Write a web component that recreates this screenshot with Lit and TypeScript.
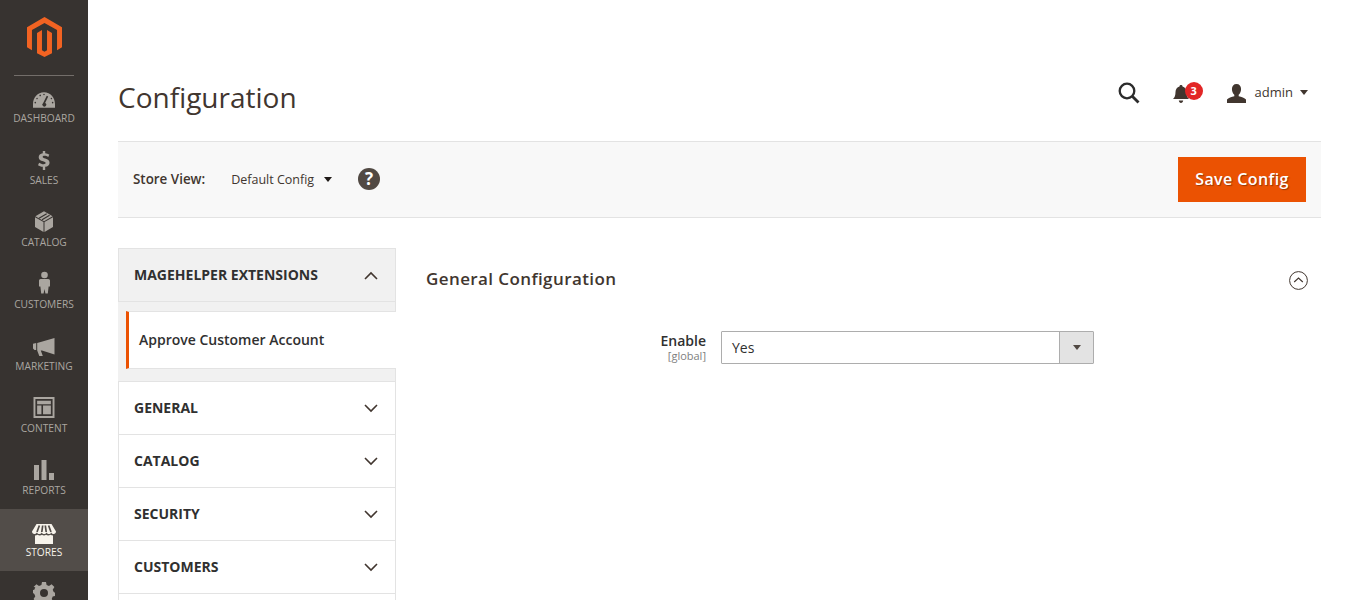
import { LitElement, html, css, svg } from "lit";
import { customElement } from "lit/decorators.js";

const nav = [
  { label: "DASHBOARD", w: 22, h: 16, vb: "0 0 24 17", icon: svg`<path fill-rule="evenodd" d="M12 0C5 0 0 6 0 13v4h24v-4C24 6 19 0 12 0ZM16.600 4.600 13.200 11.700a2.100 2.100 0 1 1-2.100.2l3.900-8ZM12 1.600a.8.8 0 1 1 0 1.700.8.8 0 0 1 0-1.700ZM7.400 2.800a.8.8 0 1 1 .9 1.500.8.8 0 0 1-.9-1.500ZM3.900 6.200a.8.8 0 1 1 1 1.300.8.8 0 0 1-1-1.300ZM2.400 10.500a.8.8 0 1 1 .2 1.700.8.8 0 0 1-.2-1.700ZM20.600 6.200a.8.8 0 1 1-1 1.300.8.8 0 0 1 1-1.300ZM21.500 10.500a.8.8 0 1 1-.2 1.700.8.8 0 0 1 .2-1.700Z"/>` },
  { label: "SALES", w: 12, h: 19, vb: "0 0 14 22", icon: svg`<path d="M5.600 0h2.800v2.400c1.900.2 3.600.8 4.800 1.600l-1.200 3c-1.300-.8-3-1.400-4.500-1.400-1.300 0-2 .5-2 1.200 0 .8 1 1.200 3 1.800 3 .9 5 2.100 5 4.900 0 2.600-1.900 4.400-5.100 4.800V22H5.600v-3.600c-2.200-.2-4.200-.9-5.600-1.900l1.300-3c1.500 1 3.500 1.800 5.300 1.800 1.500 0 2.300-.5 2.300-1.300s-.9-1.300-3-2C2.900 11.100.8 10 .8 7.200.8 4.700 2.600 2.900 5.600 2.500Z"/>` },
  { label: "CATALOG", w: 20, h: 21, vb: "0 0 20 21", icon: svg`<path d="M9.500 11v10L1 16V6.300ZM10.500 11v10l8.500-5V6.300Z"/><path d="M10 .3 18.600 5.300 10 10.200 1.400 5.300Z"/><path d="M5 7.300 12.700 2.800M8 8.700 15.600 4.300" stroke="#373330" stroke-width="1.200" fill="none"/>` },
  { label: "CUSTOMERS", w: 11, h: 23, vb: "0 0 12 24", icon: svg`<circle cx="6" cy="3.800" r="3.600"/><path d="M1.800 8.200h8.400c1 0 1.800.8 1.800 1.800v6.300h-1.500l-.9 7.700H7l-1-5-1 5H2.400l-.9-7.700H0V10c0-1 .8-1.800 1.800-1.800Z"/>` },
  { label: "MARKETING", w: 22, h: 18, vb: "0 0 22 18", icon: svg`<path d="M21.500 0v16.500L9 12.500H7.800l2 5.500H6.300L4.200 12.500V5L21.500 0ZM0 5.700 3.200 5v7H1.500L0 10.500Z"/>` },
  { label: "CONTENT", w: 22, h: 21, vb: "0 0 22 22", icon: svg`<path fill-rule="evenodd" d="M0 0h22v22H0ZM2 2v18h18V2ZM3.800 4h14.400v3.500H3.800ZM3.800 9h4.500v9H3.800ZM10 9h8.200v9H10Z"/>` },
  { label: "REPORTS", w: 20, h: 20, vb: "0 0 20 20", icon: svg`<rect x="0" y="5" width="5" height="15"/><rect x="7.500" y="0" width="5" height="20"/><rect x="15" y="13" width="5" height="7"/>` },
  { label: "STORES", w: 24, h: 20, vb: "0 0 24 20", active: true, icon: svg`<path d="M4.500 0h15L24 7.500c0 1.500-1 2.500-2.400 2.500-1.200 0-2-.6-2.400-1.500-.4 1-1.300 1.500-2.400 1.500s-2-.6-2.400-1.500c-.4 1-1.200 1.500-2.400 1.500s-2-.6-2.400-1.500c-.4 1-1.300 1.500-2.400 1.500s-2-.6-2.400-1.500C4.400 9.400 3.600 10 2.400 10 1 10 0 9 0 7.500Z"/><path d="M3 11.500c1 0 1.800-.2 2.500-.7.700.5 1.500.7 2.300.7s1.600-.2 2.200-.7c.6.500 1.300.7 2 .7s1.400-.2 2-.7c.6.500 1.400.7 2.200.7s1.600-.2 2.300-.7c.7.500 1.500.7 2.500.7V20H3Z"/><path d="M7.400 1.500 5 8M10.700 1.500 9.800 8M13.300 1.500l.9 6.500M16.600 1.500 19 8" stroke="#524d49" stroke-width="1.700" fill="none"/>` },
  { label: "", w: 22, h: 22, vb: "0 0 22 22", icon: svg`<path fill-rule="evenodd" d="M9 0h4l.6 3 2.400 1 2.600-1.700 2.800 2.800L19.700 7.700l1 2.300 1.300.8v.4-.2 3l-2.300.6-1 2.400 1.700 2.600-2.800 2.800-2.600-1.700-2.400 1-.6 2.200H9l-.6-3-2.400-1-2.600 1.700L.6 16.900 2.300 14.300l-1-2.400L0 11V8l1.300-.3 1-2.400L.6 5.100 3.400 2.300 6 4l2.400-1ZM11 7a4 4 0 1 0 0 8 4 4 0 0 0 0-8Z"/>` },
];

const tabs = ["GENERAL", "CATALOG", "SECURITY", "CUSTOMERS", ""];

const chevron = (up: boolean) => html`<svg class="chev" width="14" height="9" viewBox="0 0 14 9" fill="none" stroke="#41362f" stroke-width="1.600"><path d="${up ? "M1 8 7 2l6 6" : "M1 1l6 6 6-6"}"/></svg>`;

@customElement("app-root")
export class AppRoot extends LitElement {
  static styles = css`
    :host { display: block; height: 600px; overflow: hidden; font-family: "Open Sans", sans-serif; color: #41362f; background: #fff; }
    * { box-sizing: border-box; }
    .shell { display: flex; height: 600px; overflow: hidden; }
    .side { width: 88px; flex: none; background: #373330; height: 680px; }
    .logo { height: 75px; display: flex; justify-content: center; padding-top: 17px; }
    .rule { height: 1px; margin: 0 14px -1px; background: #736e6a; }
    .nav-item { height: 62px; display: flex; flex-direction: column; align-items: center; color: #aaa6a0; fill: #aaa6a0; }
    .nav-item.active { background: #524d49; color: #f7f3eb; fill: #f7f3eb; }
    .nav-icon { height: 37px; display: flex; align-items: flex-end; justify-content: center; padding-bottom: 4px; }
    .nav-item.active .nav-icon { padding-bottom: 2px; }
    .nav-label { font-size: 10.2px; line-height: 12px; }
    .main { flex: 1; min-width: 0; padding: 0 30px; }
    .top { height: 141px; display: flex; align-items: flex-start; justify-content: space-between; }
    h1 { margin: 76px 0 0; font-size: 28px; line-height: 42px; font-weight: 400; color: #41362f; }
    .actions { display: flex; align-items: center; margin-top: 79px; height: 26px; padding-right: 13px; }
    .search { margin-right: 33px; display: block; margin-top: 2px; }
    .bell { position: relative; width: 30px; height: 26px; margin-right: 24px; }
    .bell svg { position: absolute; left: 0; top: 6px; }
    .badge { position: absolute; left: 12px; top: 3px; width: 18px; height: 18px; border-radius: 50%; background: #e22626; color: #fff; font-size: 11px; font-weight: 700; line-height: 18px; text-align: center; }
    .user { display: flex; align-items: center; font-size: 13px; color: #41362f; }
    .user svg.person { margin-right: 9px; margin-top: 2px; }
    .caret { width: 0; height: 0; border-left: 4.5px solid transparent; border-right: 4.5px solid transparent; border-top: 5px solid #41362f; display: block; }
    .user .caret { margin-left: 7px; }
    .bar { height: 77px; background: #f8f8f8; border-top: 1px solid #e3e3e3; border-bottom: 1px solid #e3e3e3; display: flex; align-items: center; padding: 0 15px; }
    .left { display: flex; align-items: center; padding-bottom: 2px; }
    .bar b { font-size: 13.4px; font-weight: 600; color: #41362f; margin-right: 26px; }
    .scope { font-size: 12.5px; color: #41362f; margin: 2px 10px 0 0; }
    .bar .caret { border-top-color: #1f1a17; border-left-width: 4px; border-right-width: 4px; margin-right: 27px; margin-top: 2px; }
    .help { width: 22px; height: 22px; border-radius: 50%; background: #514943; color: #fff; font-size: 17px; font-weight: 700; line-height: 22px; text-align: center; margin-left: -1px; margin-top: 1px; }
    .spacer { flex: 1; }
    .save { width: 128px; height: 45px; background: #eb5202; border: 0; color: #fff; font: 600 16px/45px "Open Sans", sans-serif; letter-spacing: .4px; text-shadow: 1px 1px 1px rgba(0,0,0,.35); padding: 0; }
    .cols { display: flex; padding-top: 30px; }
    .tabs { width: 278px; flex: none; }
    .tab { height: 53px; border: 1px solid #e3e3e3; border-top: 0; background: #fff; display: flex; align-items: center; justify-content: space-between; padding: 0 17px 0 15px; font-size: 14px; font-weight: 700; color: #303030; }
    .tab span { margin-bottom: 2px; }
    .tab.open { height: 54px; background: #f1f1f1; border-top: 1px solid #e3e3e3; }
    .subwrap { background: #f1f1f1; padding: 9px 0 12px 8px; border-right: 1px solid #e3e3e3; border-bottom: 1px solid #e3e3e3; }
    .sub { height: 58px; background: #fff; border-left: 3px solid #eb5202; border-top: 1px solid #e3e3e3; border-bottom: 1px solid #e3e3e3; display: flex; align-items: center; padding: 0 0 2px 10px; font-size: 14px; font-weight: 600; color: #303030; margin-right: -1px; }
    .content { flex: 1; padding-left: 30px; min-width: 0; }
    .head { height: 62px; display: flex; align-items: center; justify-content: space-between; padding-right: 13px; }
    .head h2 { margin: 0 0 2px; font-size: 17px; font-weight: 600; letter-spacing: .4px; color: #41362f; }
    .head svg { margin-top: 2px; }
    .row { display: flex; margin-top: 21px; }
    .lab { width: 295px; text-align: right; padding-right: 15px; }
    .lab div { font-size: 14px; font-weight: 600; line-height: 19px; color: #303030; }
    .lab small { display: block; font-size: 11px; line-height: 12px; color: #808080; }
    .select { width: 373px; height: 33px; border: 1px solid #adadad; display: flex; align-items: center; font-size: 14px; color: #303030; padding-left: 10px; border-radius: 1px; }
    .select span { flex: 1; }
    .arrow { width: 34px; height: 31px; background: #e3e3e3; border-left: 1px solid #adadad; display: flex; align-items: center; justify-content: center; }
    .arrow .caret { border-top-color: #514943; }
  `;

  render() {
    return html`<div class="shell">
      <aside class="side">
        <div class="logo">
          <svg width="35" height="40" viewBox="0 0 36 41"><path fill="#f26322" d="M18 0 0 10.400v20.700l5.100 3V13.400L18 6l12.900 7.400v20.700l5.100-3V10.400Z"/><path fill="#f26322" d="M20.600 34.100 18 35.600l-2.600-1.500V13.400l-5.100 3v20.700L18 41l7.700-3.900V16.400l-5.100-3Z"/></svg>
        </div>
        <div class="rule"></div>
        ${nav.map((n) => html`<div class="nav-item ${n.active ? "active" : ""}">
          <div class="nav-icon"><svg width="${n.w}" height="${n.h}" viewBox="${n.vb}">${n.icon}</svg></div>
          ${n.label ? html`<div class="nav-label">${n.label}</div>` : ""}
        </div>`)}
      </aside>
      <main class="main">
        <div class="top">
          <h1>Configuration</h1>
          <div class="actions">
            <svg class="search" width="22" height="22" viewBox="0 0 22 22" fill="none" stroke="#2c2c2c" stroke-width="2.300"><circle cx="9" cy="9" r="7.300"/><path d="m14.500 14.500 6 6" stroke-width="2.800"/></svg>
            <div class="bell">
              <svg width="16" height="19" viewBox="0 0 16 19" fill="#41362f"><path d="M8 0c1 0 1.500.6 1.500 1.400C12 2 13.500 4.300 13.500 7c0 3.500.8 5.500 2.500 7H0c1.700-1.500 2.500-3.500 2.500-7C2.500 4.300 4 2 6.500 1.400 6.500.6 7 0 8 0ZM5.800 15.500h4.400C10 17 9.200 18 8 18s-2-1-2.200-2.500Z"/></svg>
              <div class="badge">3</div>
            </div>
            <div class="user">
              <svg class="person" width="19" height="19" viewBox="0 0 20 20" fill="#41362f"><path d="M10 0c3 0 4.800 2.200 4.800 5.200 0 2.500-1 4.800-2.500 6v1.600c2.700.7 6.500 1.800 7.700 3.500V20H0v-3.700c1.200-1.700 5-2.800 7.700-3.500v-1.600c-1.500-1.200-2.500-3.500-2.500-6C5.200 2.200 7 0 10 0Z"/></svg>
              admin<span class="caret"></span>
            </div>
          </div>
        </div>
        <div class="bar">
          <div class="left">
            <b>Store View:</b>
            <span class="scope">Default Config</span>
            <span class="caret"></span>
            <div class="help">?</div>
          </div>
          <div class="spacer"></div>
          <button class="save">Save Config</button>
        </div>
        <div class="cols">
          <div class="tabs">
            <div class="tab open"><span>MAGEHELPER EXTENSIONS</span> ${chevron(true)}</div>
            <div class="subwrap"><div class="sub">Approve Customer Account</div></div>
            ${tabs.map((t) => html`<div class="tab">${t ? html`<span>${t}</span> ${chevron(false)}` : ""}</div>`)}
          </div>
          <div class="content">
            <div class="head">
              <h2>General Configuration</h2>
              <svg width="19" height="19" viewBox="0 0 19 19" fill="none" stroke="#41362f"><circle cx="9.500" cy="9.500" r="8.900"/><path d="m5.200 11 4.300-4 4.300 4" stroke-width="1.100"/></svg>
            </div>
            <div class="row">
              <div class="lab"><div>Enable</div><small>[global]</small></div>
              <div class="select"><span>Yes</span><div class="arrow"><i class="caret"></i></div></div>
            </div>
          </div>
        </div>
      </main>
    </div>`;
  }
}
